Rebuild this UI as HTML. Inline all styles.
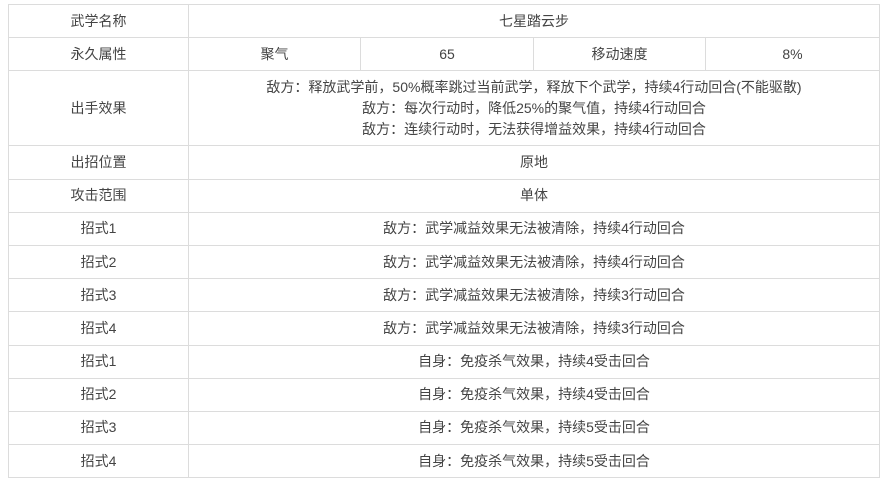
<!DOCTYPE html>
<html><head><meta charset="utf-8"><style>
html,body{margin:0;padding:0;background:#fff;width:887px;height:484px;overflow:hidden}
body{font-family:"Liberation Sans","Noto Sans CJK SC",sans-serif;font-size:14px;color:#444}
table{position:absolute;left:8px;top:4px;border-collapse:collapse;width:871px;table-layout:fixed}
td{border:1px solid #dcdcdc;text-align:center;padding:0;height:32.2px;line-height:21px}
</style></head><body>
<table>
<colgroup><col style="width:180px"><col style="width:172px"><col style="width:173px"><col style="width:172px"><col style="width:174px"></colgroup>
<tr><td>武学名称</td><td colspan="4">七星踏云步</td></tr>
<tr><td>永久属性</td><td>聚气</td><td>65</td><td>移动速度</td><td>8%</td></tr>
<tr><td style="height:74px">出手效果</td><td colspan="4">敌方：释放武学前，50%概率跳过当前武学，释放下个武学，持续4行动回合(不能驱散)<br>敌方：每次行动时，降低25%的聚气值，持续4行动回合<br>敌方：连续行动时，无法获得增益效果，持续4行动回合</td></tr>
<tr><td>出招位置</td><td colspan="4">原地</td></tr>
<tr><td>攻击范围</td><td colspan="4">单体</td></tr>
<tr><td>招式1</td><td colspan="4">敌方：武学减益效果无法被清除，持续4行动回合</td></tr>
<tr><td>招式2</td><td colspan="4">敌方：武学减益效果无法被清除，持续4行动回合</td></tr>
<tr><td>招式3</td><td colspan="4">敌方：武学减益效果无法被清除，持续3行动回合</td></tr>
<tr><td>招式4</td><td colspan="4">敌方：武学减益效果无法被清除，持续3行动回合</td></tr>
<tr><td>招式1</td><td colspan="4">自身：免疫杀气效果，持续4受击回合</td></tr>
<tr><td>招式2</td><td colspan="4">自身：免疫杀气效果，持续4受击回合</td></tr>
<tr><td>招式3</td><td colspan="4">自身：免疫杀气效果，持续5受击回合</td></tr>
<tr><td>招式4</td><td colspan="4">自身：免疫杀气效果，持续5受击回合</td></tr>
</table>
</body></html>
